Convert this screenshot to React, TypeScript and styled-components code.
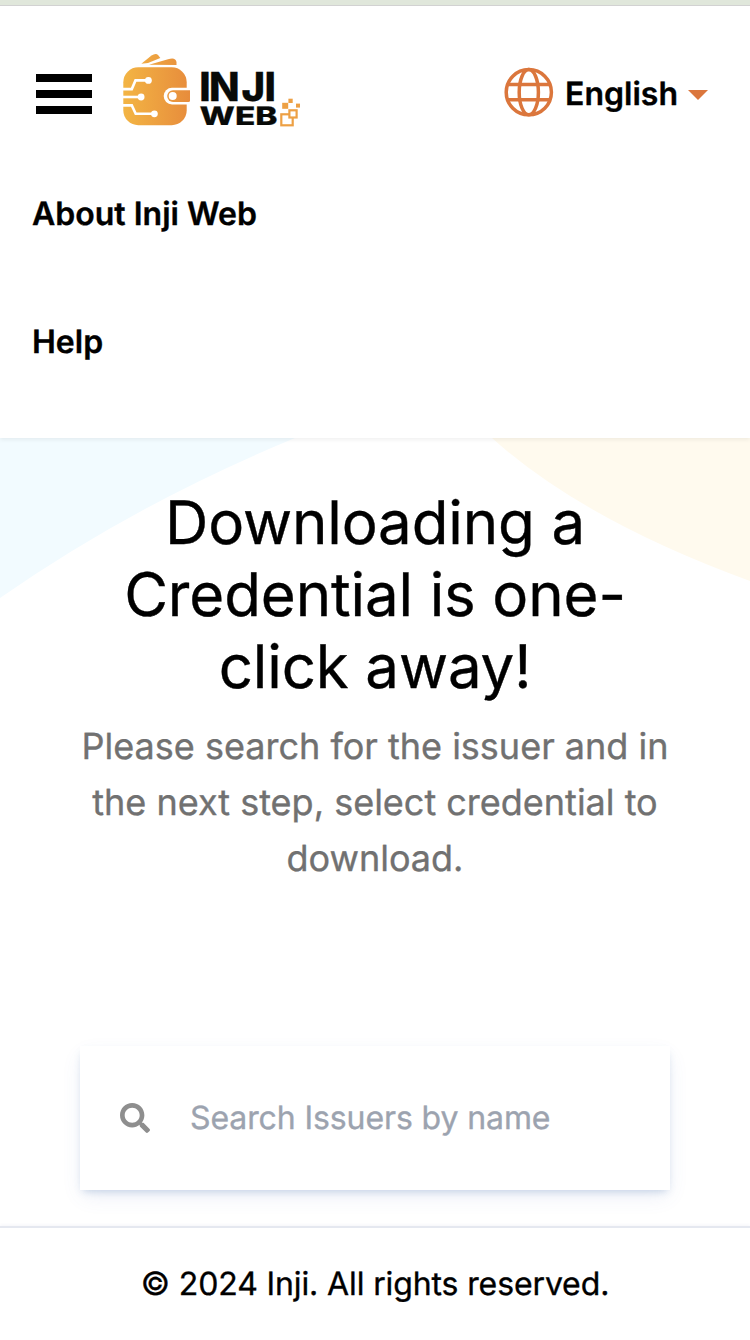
import React from "react";
import styled, { createGlobalStyle } from "styled-components";
import { FaSearch } from "react-icons/fa";

const GlobalStyle = createGlobalStyle`
  *, *::before, *::after { box-sizing: border-box; }
  body {
    margin: 0;
    background: #fff;
    color: #000;
    font-family: Inter, "Liberation Sans", sans-serif;
    text-rendering: geometricPrecision;
    -webkit-text-stroke: 0.35px;
  }
  h1, p { margin: 0; }
`;

const Page = styled.div`
  height: 1340px;
  display: flex;
  flex-direction: column;
  overflow: hidden;
`;

const TopStrip = styled.div`
  height: 6px;
  flex: none;
  background: #e0e7db;
  border-bottom: 1px solid #d3d3d3;
`;

const Header = styled.header`
  position: relative;
  z-index: 1;
  flex: none;
  height: 432px;
  background: #fff;
  box-shadow: 0 2px 4px rgba(0, 0, 0, 0.06);
`;

const TopBar = styled.div`
  display: flex;
  align-items: center;
  height: 144px;
  padding: 32px 42px 0 36px;
`;

const MenuButton = styled.button`
  display: flex;
  flex-direction: column;
  gap: 8px;
  width: 56px;
  padding: 0;
  border: 0;
  background: none;
`;

const MenuBar = styled.span`
  height: 8px;
  background: #000;
`;

const LogoSvg = styled.svg`
  display: block;
  margin: -3px 0 0 28px;
`;

const Language = styled.div`
  display: flex;
  align-items: center;
  margin-left: auto;
  font-size: 32px;
  font-weight: 600;
  line-height: 40px;
`;

const LanguageName = styled.span`
  margin: 0 10px 0 11px;
`;

const GlobeSvg = styled.svg`
  margin-bottom: 4px;
`;

const Caret = styled.svg`
  margin-top: 2px;
`;

const Nav = styled.nav`
  display: flex;
  flex-direction: column;
  gap: 80px;
  padding: 40px 32px 0;
`;

const NavLink = styled.a`
  font-size: 32px;
  font-weight: 600;
  line-height: 48px;
  color: #000;
`;

const Main = styled.main`
  position: relative;
  flex: none;
  height: 788px;
  padding: 49px 80px 0;
`;

const Backdrop = styled.svg`
  position: absolute;
  top: 0;
  left: 0;
`;

const Intro = styled.section`
  position: relative;
  text-align: center;
`;

const Title = styled.h1`
  font-size: 60px;
  font-weight: 400;
  line-height: 72px;
  letter-spacing: -0.12px;
`;

const Subtitle = styled.p`
  margin-top: 15px;
  font-size: 36px;
  line-height: 56px;
  color: #717171;
`;

const SearchBox = styled.label`
  position: relative;
  display: flex;
  align-items: center;
  gap: 40px;
  height: 144px;
  margin-top: 160px;
  padding: 0 40px;
  background: #fff;
  color: #8e8e8e;
  box-shadow: 0 8px 20px -3px rgba(80, 110, 190, 0.12), 0 4px 8px -3px rgba(80, 125, 175, 0.3);
`;

const SearchInput = styled.input`
  flex: 1;
  min-width: 0;
  padding: 0;
  border: 0;
  outline: 0;
  background: none;
  font: 400 32px/48px Inter, "Liberation Sans", sans-serif;
  letter-spacing: -0.1px;
  text-rendering: geometricPrecision;
  &::placeholder { color: #9ca3af; opacity: 1; }
`;

const Footer = styled.footer`
  position: relative;
  flex: 1;
  padding: 36px 0 0;
  border-top: 2px solid #e5e8f0;
  background: #fff;
  box-shadow: 0 -1px 3px rgba(80, 90, 150, 0.06);
  text-align: center;
  font-size: 32px;
  line-height: 40px;
  letter-spacing: -0.12px;
`;

function Logo() {
  return (
    <LogoSvg width="182" height="84" viewBox="120 50 182 84" role="img" aria-label="Inji Web">
      <defs>
        <linearGradient id="wallet" x1="123" x2="190" y1="0" y2="0" gradientUnits="userSpaceOnUse">
          <stop offset="0" stopColor="#f3b544" />
          <stop offset="1" stopColor="#e78c3c" />
        </linearGradient>
      </defs>
      <g fill="url(#wallet)">
        <path d="M141.3 62.7 151.5 54.6Q156 51.6 158.4 54.5L160.3 57 148 62Z" />
        <path d="M149 63.8 168 58.2Q175.6 55.8 176.5 61V64Z" />
        <rect x="123.3" y="66.3" width="63.4" height="57.9" rx="15" />
      </g>
      <path d="M188 86.8H172a8.3 8.3 0 0 0 0 16.6H188Z" fill="#fff" />
      <path d="M190 89.3H173a5.8 5.8 0 0 0 0 11.6H188.5q1.5 0 1.5-1.5Z" fill="url(#wallet)" />
      <circle cx="172.7" cy="95.1" r="4" fill="#fff" />
      <g fill="none" stroke="#fff" strokeWidth="2.6">
        <path d="M122.5 88.1H131.8L135.5 79.4H148" />
        <path d="M122.5 96H141" />
        <path d="M122.5 104.4H131.8L135.7 112.8H154" />
      </g>
      <g fill="#fff">
        <circle cx="148.4" cy="79.4" r="3.4" />
        <circle cx="141.1" cy="96" r="3.4" />
        <circle cx="154.4" cy="112.8" r="3.4" />
      </g>
      <g fill="#080a08" stroke="#080a08" fontFamily="Inter, sans-serif" fontWeight="800">
        <text x="199.2 209 241.5 264.6" y="99.7" fontSize="40" strokeWidth=".3">INJI</text>
        <text x="199.6" y="124.3" fontSize="25.5" strokeWidth=".2" textLength="78" lengthAdjust="spacingAndGlyphs">WEB</text>
      </g>
      <g fill="#eda044">
        <rect x="282.2" y="101.8" width="6" height="6" />
        <rect x="288.4" y="97.7" width="4.3" height="4.3" />
        <rect x="296" y="102.6" width="4" height="4" />
      </g>
      <g fill="#fff" stroke="#eda044" strokeWidth="2.2">
        <rect x="281.3" y="113.3" width="11.4" height="11" />
        <rect x="289.4" y="109.3" width="7.2" height="7.2" />
      </g>
    </LogoSvg>
  );
}

function Globe() {
  return (
    <GlobeSvg width="50" height="50" viewBox="504 67 50 50" fill="none" stroke="#db763c" strokeWidth="3.5">
      <circle cx="528.8" cy="92.2" r="22.6" />
      <ellipse cx="528.8" cy="92.2" rx="9.6" ry="22.6" />
      <path d="M507.5 84.5H550M507.5 99.7H550" />
    </GlobeSvg>
  );
}

export default function App() {
  return (
    <Page>
      <GlobalStyle />
      <TopStrip />
      <Header>
        <TopBar>
          <MenuButton aria-label="Menu">
            <MenuBar />
            <MenuBar />
            <MenuBar />
          </MenuButton>
          <Logo />
          <Language>
            <Globe />
            <LanguageName>English</LanguageName>
            <Caret width="20" height="10" viewBox="0 0 20 10">
              <path d="M0 0H20L10 10Z" fill="#db763c" />
            </Caret>
          </Language>
        </TopBar>
        <Nav>
          <NavLink>About Inji Web</NavLink>
          <NavLink>Help</NavLink>
        </Nav>
      </Header>
      <Main>
        <Backdrop width="750" height="200" viewBox="0 0 750 200" aria-hidden="true">
          <path d="M0 0H295Q135 66 0 160Z" fill="#f2fbff" />
          <path d="M492 0H750V143Q583 82 492 0Z" fill="#fffaee" />
        </Backdrop>
        <Intro>
          <Title>Downloading a Credential is one-click away!</Title>
          <Subtitle>Please search for the issuer and in the next step, select credential to download.</Subtitle>
        </Intro>
        <SearchBox>
          <FaSearch size={30} />
          <SearchInput placeholder="Search Issuers by name" />
        </SearchBox>
      </Main>
      <Footer>© 2024 Inji. All rights reserved.</Footer>
    </Page>
  );
}
